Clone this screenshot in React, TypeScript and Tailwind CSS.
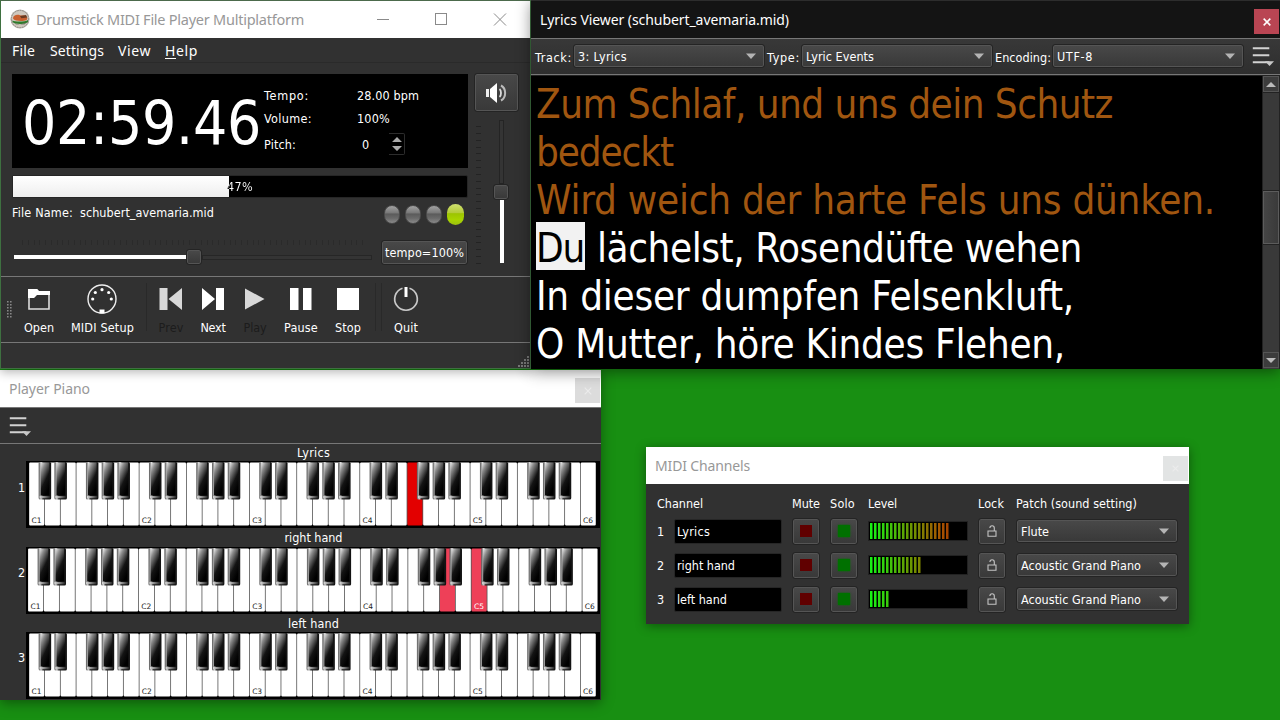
import { useLayoutEffect, useRef, useState, type ReactNode } from "react";

/* A run of text whose letter spacing is adjusted so that it fills w pixels. */
function Fit({ w, className = "", children }: { w: number; className?: string; children: ReactNode }) {
  const ref = useRef<HTMLSpanElement>(null);
  const [spacing, setSpacing] = useState(0);
  useLayoutEffect(() => {
    const el = ref.current;
    if (!el) return;
    const count = (el.textContent ?? "").length;
    setSpacing((w - el.getBoundingClientRect().width) / count);
  }, [w]);
  return (
    <span ref={ref} className={`inline-block shrink-0 whitespace-pre ${className}`} style={{ letterSpacing: `${spacing}px` }}>
      {children}
    </span>
  );
}

const segoe = "font-['Noto_Sans',sans-serif]";
const raised = "border border-[#555] bg-linear-to-b from-[#484848] to-[#393939] outline outline-[#242424] rounded-[2px]";

function Down() {
  return (
    <svg width="10" height="6" viewBox="0 0 10 6" className="shrink-0">
      <path d="M0 .5h10L5 6z" fill="#b4b4b4" />
    </svg>
  );
}

function Combo({ text, w, className }: { text: string; w: number; className: string }) {
  return (
    <div className={`flex h-[22px] shrink-0 items-center justify-between pr-[7px] pl-[3px] ${raised} ${className}`}>
      <Fit w={w} className="pt-[2px]">{text}</Fit>
      <Down />
    </div>
  );
}

function MenuIcon() {
  return (
    <svg width="24" height="20" viewBox="0 0 24 20" className="shrink-0">
      <path d="M.8 1.200h16.500M.8 8.200h16.500M.8 15.200h16.500" stroke="#d2d2d2" strokeWidth="1.900" />
      <path d="M13 14.300h9l-4.500 4.700z" fill="#c8c8c8" />
    </svg>
  );
}

function CloseX({ size, color, w }: { size: number; color: string; w: number }) {
  return (
    <svg width={size} height={size} viewBox="0 0 12 12">
      <path d="M1 1l10 10M11 1L1 11" stroke={color} strokeWidth={w} />
    </svg>
  );
}

function AppIcon() {
  return (
    <svg width="20" height="20" viewBox="0 0 20 20">
      <circle cx="10" cy="10" r="9.600" fill="#b9b4ac" />
      <circle cx="10" cy="10" r="8.600" fill="#cfc8be" stroke="#8f8a84" strokeWidth="1" strokeDasharray="1.500 1" />
      <path d="M2.500 11.500c2 1.500 13 1.500 15.500-.5v1.800c-1.500 2.700-13.500 3-15.500.2z" fill="#2f7a2c" />
      <path d="M4 14.300c3 1.300 9.500 1.200 12.500-.2l-2 1.200H6z" fill="#282c1c" />
      <path d="M3 9.500C3 6 7 5.200 10 6.200c2 .8 3-.4 5 .6 2.500 1.200 3 3 1.500 4.200-3 1.500-11.500 1.500-13.500-1.500z" fill="#c9602f" />
      <path d="M10 7l6-1 1.300 2.500-6 .8z" fill="#6b3a20" />
    </svg>
  );
}

function Led({ on = false }: { on?: boolean }) {
  return on ? (
    <div className="h-[21px] w-[17px] rounded-full bg-[linear-gradient(#d0e070_0,#b4cb3a_42%,#9dc400_46%,#a8d400_75%,#9cc010_100%)]" />
  ) : (
    <div className="h-[19px] w-[16px] rounded-full border border-[#4a4a4a] bg-[linear-gradient(#a2a2a2_0,#777_42%,#5a5a5a_46%,#6a6a6a_72%,#8a8a8a_100%)]" />
  );
}

function Tool({ label, w, cell, dim = false, children }: { label: string; w: number; cell: string; dim?: boolean; children: ReactNode }) {
  return (
    <div className={`flex shrink-0 flex-col items-center ${cell}`}>
      <svg width="32" height="32" viewBox="0 0 32 32">{children}</svg>
      <Fit w={w} className={`mt-[5px] leading-4 ${dim ? "text-[#1c1c1c]" : "text-white"}`}>{label}</Fit>
    </div>
  );
}

function Ticks({ count, vertical }: { count: number; vertical?: boolean }) {
  return (
    <div className={vertical ? "flex h-[138px] w-[5px] flex-col justify-between" : "flex h-[5px] w-[342px] justify-between"}>
      {Array.from({ length: count }, (_, i) => (
        <div key={i} className={vertical ? "h-px w-full bg-[#232323]" : "h-full w-px bg-[#2a2a2a]"} />
      ))}
    </div>
  );
}

function PlayerWindow() {
  return (
    <section className="absolute top-0 left-0 z-10 flex h-[369px] w-[531px] flex-col border border-[#3e7040] border-t-[#4c6a4c] bg-[#313131] shadow-[0_3px_10px_rgba(0,0,0,.3)]">
      <header className={`flex h-[37px] shrink-0 items-center bg-white pb-[2px] pl-[9px] text-[14.500px] text-[#989898] ${segoe}`}>
        <AppIcon />
        <Fit w={268} className="ml-[6px]">Drumstick MIDI File Player Multiplatform</Fit>
        <svg width="132" height="14" viewBox="0 0 132 14" className="ml-[73px]" fill="none" stroke="#8a8a8a">
          <path d="M0 7.500h12M117 1.500l12 12M129 1.500l-12 12" />
          <rect x="58.500" y="1.500" width="11" height="11" />
        </svg>
      </header>
      <nav className={`flex h-[25px] shrink-0 items-center border-b border-[#2a2a2a] pt-[2px] pl-[11px] text-[14px] text-white ${segoe}`}>
        <Fit w={23}>File</Fit>
        <Fit w={54} className="ml-[15px]">Settings</Fit>
        <Fit w={33} className="ml-[14px]">View</Fit>
        <Fit w={33} className="ml-[14px]"><u className="underline-offset-2">H</u>elp</Fit>
      </nav>
      <div className="flex h-[213px] shrink-0 pt-[11px] pl-[11px]">
        <div className="w-[456px] shrink-0">
          <div className="flex h-[94px] overflow-hidden bg-black pl-[10px]">
            <Fit w={239} className="text-[60px] leading-[98px]">02:59.46</Fit>
            <div className="ml-[3px] pt-[13px]">
              <div className="flex h-[18px] items-center"><Fit w={45}>Tempo:</Fit><Fit w={62} className="ml-[48px]">28.00 bpm</Fit></div>
              <div className="mt-[5px] flex h-[18px] items-center"><Fit w={48}>Volume:</Fit><Fit w={33} className="ml-[45px]">100%</Fit></div>
              <div className="mt-[5px] flex h-[22px] items-center">
                <Fit w={32} className="pt-px">Pitch:</Fit>
                <Fit w={8} className="ml-[66px] pt-px">0</Fit>
                <div className="ml-[19px] flex h-[22px] w-4 flex-col items-center justify-center rounded-r-[2px] border border-l-0 border-[#2c2c2c]">
                  <svg width="10" height="14" viewBox="0 0 10 14"><path d="M0 5h10L5 0zM0 9h10l-5 5z" fill="#aaa" /></svg>
                </div>
              </div>
            </div>
          </div>
          <div className="mt-[7px] grid h-[23px] grid-cols-1 grid-rows-1 rounded-[2px] border border-[#262626] bg-black">
            <div className="col-start-1 row-start-1 w-[216px] bg-linear-to-b from-white to-[#eee]" />
            <div className="col-start-1 row-start-1 flex items-center pl-[214px] text-white"><Fit w={26} className="bg-[linear-gradient(90deg,#111_9%,#fff_10%)] bg-clip-text text-transparent">47%</Fit></div>
          </div>
          <div className="flex h-[32px] items-center justify-between pr-[4px]">
            <div className="flex pb-[3px]"><Fit w={61}>File Name:</Fit><Fit w={134} className="ml-[7px]">schubert_avemaria.mid</Fit></div>
            <div className="flex items-center gap-[5px]"><Led /><Led /><Led /><Led on /></div>
          </div>
          <div className="flex h-[40px] pt-px">
            <div className="w-[370px] pl-[2px]">
              <div className="pt-[9px] pl-[8px]"><Ticks count={60} /></div>
              <div className="mt-[4px] flex h-[16px] items-center">
                <div className="h-1 w-[172px] bg-white" />
                <div className={`mx-px h-[14px] w-[14px] ${raised}`} />
                <div className="h-[5px] w-[170px] border border-[#262626] bg-[#343434]" />
              </div>
            </div>
            <div className={`mt-[10px] flex h-[23px] w-[85px] shrink-0 items-center justify-center pt-px ${raised}`}><Fit w={79}>tempo=100%</Fit></div>
          </div>
        </div>
        <div className="ml-[7px] w-[44px]">
          <div className={`flex h-[37px] w-[43px] items-center justify-center pr-[2px] ${raised}`}>
            <svg width="24" height="24" viewBox="0 0 24 24" fill="none">
              <path d="M2 8h3v8H2z" fill="#eee" /><path d="M6 8l7-6v20l-7-6z" fill="#fff" />
              <path d="M15.500 8c2 1.500 2 6.500 0 8" stroke="#ddd" strokeWidth="1.800" />
              <path d="M17 4.500c5.500 3 5.500 12 0 15" stroke="#bbb" strokeWidth="2" />
            </svg>
          </div>
          <div className="flex pt-[9px]">
            <div className="pt-[6px] pl-px"><Ticks count={21} vertical /></div>
            <div className="ml-[13px] flex w-[14px] flex-col items-center">
              <div className="h-[64px] w-[5px] border border-[#242424] bg-[#343434]" />
              <div className={`my-px h-[14px] w-[14px] ${raised}`} />
              <div className="ml-px h-[63px] w-1 bg-white" />
            </div>
          </div>
        </div>
      </div>
      <div className="flex h-[67px] shrink-0 border-y border-[#777] pt-[6px]">
        <svg width="6" height="18" viewBox="0 0 6 18" className="mt-[18px] ml-[6px]"><path d="M.8 0v18M3.800 0v18" stroke="#888" strokeWidth="1.600" strokeDasharray="1.500 1.500" /></svg>
        <Tool label="Open" w={30} cell="w-[52px]">
          <path d="M6 26V7h8l2 3h10v16z" fill="none" stroke="#ddd" strokeWidth="1.600" /><path d="M5 6h9l2 2h11v4H14l-3 3H5z" fill="#fff" />
        </Tool>
        <Tool label="MIDI Setup" w={63} cell="w-[75px]">
          <circle cx="15" cy="16" r="14" fill="none" stroke="#eee" strokeWidth="1.400" />
          <g fill="#fff"><circle cx="5.700" cy="16" r="1.600" /><circle cx="8.300" cy="9.500" r="1.600" /><circle cx="15" cy="6.700" r="1.600" /><circle cx="21.700" cy="9.500" r="1.600" /><circle cx="24.300" cy="16" r="1.600" /><path d="M12.500 26.500h5v4h-5z" /></g>
        </Tool>
        <div className="ml-[6px] h-[48px] w-[5px] border-l border-[#292929]" />
        <Tool label="Prev" w={25} cell="w-[40px]" dim><path d="M4.500 5h8v22h-8zM27 5v22L13.500 16z" fill="#d8d8d8" /></Tool>
        <Tool label="Next" w={25} cell="w-[44px]"><path d="M19 5h8v22h-8zM5 5v22l13-11z" fill="#fff" /></Tool>
        <Tool label="Play" w={23} cell="ml-px w-[38px]" dim><path d="M6 5.500v21L25.500 16z" fill="#d8d8d8" /></Tool>
        <Tool label="Pause" w={34} cell="w-[54px]"><path d="M5 5h8.500v22H5zM18 5h8.500v22H18z" fill="#fff" /></Tool>
        <Tool label="Stop" w={26} cell="w-[40px]"><path d="M5 5h22v22H5z" fill="#fff" /></Tool>
        <div className="ml-[7px] h-[48px] w-[7px] border-x border-[#292929]" />
        <Tool label="Quit" w={24} cell="ml-[5px] w-[38px]">
          <path d="M12.500 5.200a11.300 11.300 0 1 0 7 0" fill="none" stroke="#c8c8c8" strokeWidth="1.700" /><path d="M14.500 4h3v10h-3z" fill="#fff" />
        </Tool>
      </div>
      <footer className="flex min-h-0 flex-1 items-end justify-end">
        <svg width="12" height="12" viewBox="0 0 12 12" fill="#777"><path d="M9 0h2v2H9zM9 3h2v2H9zM6 3h2v2H6zM9 6h2v2H9zM6 6h2v2H6zM3 6h2v2H3zM9 9h2v2H9zM6 9h2v2H6zM3 9h2v2H3zM0 9h2v2H0z" /></svg>
      </footer>
    </section>
  );
}

function Lyric({ w, sung = false, children }: { w: number; sung?: boolean; children: string }) {
  return <div className={`h-[48px] ${sung ? "text-[#a05610]" : "text-white"}`}><Fit w={w}>{children}</Fit></div>;
}

function LyricsWindow() {
  return (
    <section className="absolute top-0 left-[531px] z-20 flex h-[369px] w-[749px] flex-col bg-[#313131] shadow-[0_3px_14px_rgba(0,0,0,.45)]">
      <header className={`flex h-[38px] shrink-0 items-center justify-between border-t border-[#2d2d2d] bg-[#141414] pl-[9px] text-[14px] text-white ${segoe}`}>
        <Fit w={249}>Lyrics Viewer (schubert_avemaria.mid)</Fit>
        <div className="mt-[4px] mr-px flex h-[25px] w-[25px] items-center justify-center bg-[#b94553]"><CloseX size={8} color="#fff" w={2.3} /></div>
      </header>
      <div className="flex h-[37px] shrink-0 items-center border-y border-[#777] bg-linear-to-b from-[#383838] to-[#2e2e2e] pb-px pl-[4px]">
        <Fit w={37} className="pt-[3px]">Track:</Fit>
        <Combo text="3: Lyrics" w={49} className="ml-[2px] w-[190px]" />
        <Fit w={33} className="ml-[3px] pt-[3px]">Type:</Fit>
        <Combo text="Lyric Events" w={68} className="ml-[2px] w-[190px]" />
        <Fit w={56} className="ml-[3px] pt-[3px]">Encoding:</Fit>
        <Combo text="UTF-8" w={36} className="ml-[2px] w-[190px]" />
        <div className="ml-[9px] pt-px"><MenuIcon /></div>
      </div>
      <div className="flex min-h-0 flex-1 border-t border-[#222] bg-black">
        <div className="min-w-0 flex-1 overflow-hidden pt-[2px] pl-[5px] text-[40px] leading-[52px]">
          <Lyric w={577} sung>Zum Schlaf, und uns dein Schutz</Lyric>
          <Lyric w={137} sung>bedeckt</Lyric>
          <Lyric w={679} sung>Wird weich der harte Fels uns dünken.</Lyric>
          <div className="flex h-[48px] text-white">
            <span className="h-[48px] w-[49px] bg-[#f2f2f2] text-black"><Fit w={48}>Du</Fit></span>
            <Fit w={485} className="ml-[12px]">lächelst, Rosendüfte wehen</Fit>
          </div>
          <Lyric w={538}>In dieser dumpfen Felsenkluft,</Lyric>
          <Lyric w={529}>O Mutter, höre Kindes Flehen,</Lyric>
        </div>
        <div className="flex w-[18px] shrink-0 flex-col border-x border-[#222] bg-[#393939]">
          <div className="flex h-[16px] items-center justify-center border border-[#555] bg-[#3c3c3c]"><svg width="10" height="5"><path d="M0 5h10L5 0z" fill="#bbb" /></svg></div>
          <div className="h-[99px] border-t border-[#222]" />
          <div className="h-[53px] border border-[#5c5c5c] bg-linear-to-r from-[#454545] to-[#3a3a3a] outline outline-[#222]" />
          <div className="flex-1" />
          <div className="mb-px flex h-[16px] items-center justify-center border border-[#555] bg-[#3c3c3c]"><svg width="10" height="5"><path d="M0 0h10L5 5z" fill="#bbb" /></svg></div>
        </div>
      </div>
    </section>
  );
}

const blackAfter = [0, 1, 3, 4, 5];

function Keyboard({ left, pitch, pressed, color }: { left: number; pitch: number; pressed: number[]; color: string }) {
  const whites = Array.from({ length: 36 }, (_, i) => i);
  return (
    <svg width="575" height="67" viewBox="0 0 575 67" className="block">
      <defs>
        <linearGradient id="ebony" x1="0" y1="0" x2=".55" y2="1"><stop offset="0" stopColor="#f0f0f0" /><stop offset=".25" stopColor="#8c8c8c" /><stop offset=".65" stopColor="#141414" /><stop offset="1" stopColor="#000" /></linearGradient>
        <linearGradient id="lip" x1="0" x2="1"><stop offset="0" stopColor="#ddd" /><stop offset="1" stopColor="#222" /></linearGradient>
        <linearGradient id="edge" x1="0" x2="1"><stop offset="0" stopColor="#555" /><stop offset=".2" stopColor="#ccc" /><stop offset=".35" stopColor="#222" /><stop offset="1" stopColor="#111" /></linearGradient>
      </defs>
      <rect width="574" height="67" fill="#000" />
      <rect x={left + 0.5} y="2.500" width={pitch * 36 - 1.5} height="61" fill="#555" />
      {whites.map((i) => (
        <g key={i}>
          <rect x={left + i * pitch + 0.3} y="1.500" width={pitch - 0.8} height="63" rx="1" fill={pressed.includes(i) ? color : "#fff"} />
          {i % 7 === 0 && (
            <text x={left + i * pitch + 2.6} y="62" fontSize="7.500" className="font-['DejaVu_Sans',sans-serif]" fill={pressed.includes(i) ? "#fff" : "#222"}>{`C${1 + i / 7}`}</text>
          )}
        </g>
      ))}
      {whites.filter((i) => i < 35 && blackAfter.includes(i % 7)).map((i) => {
        const x = left + (i + 1) * pitch - 6;
        return (
          <g key={i}>
            <rect x={x} y="1" width="12.500" height="37.500" rx="1.500" fill="url(#edge)" />
            <rect x={x + 2} y="1.500" width="8.700" height="33" fill="url(#ebony)" />
            <rect x={x + 1} y="35" width="10.500" height="2.200" fill="url(#lip)" />
          </g>
        );
      })}
    </svg>
  );
}

function PianoWindow() {
  const rows = [
    { name: "Lyrics", w: 33, left: 2.9, pitch: 15.76, pressed: [24], color: "#e30000", gap: "h-[17px]", lead: "leading-[18px]" },
    { name: "right hand", w: 58, left: 1.8, pitch: 15.84, pressed: [26, 28], color: "#ee4058", gap: "h-[19px]", lead: "leading-[20px]" },
    { name: "left hand", w: 51, left: 2.9, pitch: 15.76, pressed: [] as number[], color: "#ee4058", gap: "h-[18px]", lead: "leading-[20px]" },
  ];
  return (
    <section className="absolute top-[370px] left-0 flex h-[330px] w-[601px] flex-col bg-[#313131] shadow-[0_3px_12px_rgba(0,0,0,.4)]">
      <header className={`flex h-[37px] shrink-0 items-center justify-between bg-white pl-[9px] text-[14px] text-[#989898] ${segoe}`}>
        <Fit w={81}>Player Piano</Fit>
        <div className="mt-[4px] mr-px flex h-[25px] w-[25px] items-center justify-center bg-[#dcdcdc]"><CloseX size={8} color="#ebebeb" w={1.6} /></div>
      </header>
      <div className="h-[37px] shrink-0 border-y border-[#777] pt-[9px] pl-[9px]"><MenuIcon /></div>
      {rows.map((r, i) => (
        <div key={r.name} className="flex">
          <div className="flex w-[26px] items-center justify-end pt-[3px]"><Fit w={8}>{String(i + 1)}</Fit></div>
          <div className="flex w-[575px] flex-col items-center">
            <div className={`${r.gap} ${r.lead}`}><Fit w={r.w}>{r.name}</Fit></div>
            <Keyboard left={r.left} pitch={r.pitch} pressed={r.pressed} color={r.color} />
          </div>
        </div>
      ))}
    </section>
  );
}

function Level({ count }: { count: number }) {
  const mix = (a: number, b: number, t: number) => Math.round(a + (b - a) * Math.min(1, Math.max(0, t)));
  return (
    <div className="flex h-[20px] w-[100px] gap-px border border-[#222] bg-black p-px">
      {Array.from({ length: count }, (_, i) => (
        <div
          key={i}
          className="h-full w-[3px] shrink-0 border-r border-r-black/50"
          style={{ backgroundColor: `rgb(${mix(24, 165, i / 17)}, ${mix(240, 70, i / 19)}, ${mix(20, 0, i / 10)})` }}
        />
      ))}
    </div>
  );
}

function ChannelsWindow() {
  const rows = [
    { name: "Lyrics", w: 33, level: 20, patch: "Flute", pw: 28 },
    { name: "right hand", w: 58, level: 13, patch: "Acoustic Grand Piano", pw: 120 },
    { name: "left hand", w: 50, level: 5, patch: "Acoustic Grand Piano", pw: 120 },
  ];
  return (
    <section className="absolute top-[447px] left-[646px] flex h-[177px] w-[543px] flex-col bg-[#313131] shadow-[0_2px_10px_rgba(0,0,0,.4)]">
      <header className={`flex h-[37px] shrink-0 items-center justify-between bg-white pl-[9px] text-[14px] text-[#989898] ${segoe}`}>
        <Fit w={95}>MIDI Channels</Fit>
        <div className="mt-[5px] mr-px flex h-[25px] w-[25px] items-center justify-center bg-[#e2e4e4]"><CloseX size={7} color="#ececec" w={2} /></div>
      </header>
      <div className="flex h-[30px] shrink-0 items-center pt-[10px] pl-[11px]">
        <div className="w-[135px]"><Fit w={46}>Channel</Fit></div>
        <div className="w-[38px]"><Fit w={28}>Mute</Fit></div>
        <div className="w-[38px]"><Fit w={25}>Solo</Fit></div>
        <div className="w-[110px]"><Fit w={29}>Level</Fit></div>
        <div className="w-[38px]"><Fit w={26}>Lock</Fit></div>
        <Fit w={121}>Patch (sound setting)</Fit>
      </div>
      {rows.map((r, i) => (
        <div key={r.name} className="flex h-[34px] shrink-0 items-center pl-[11px]">
          <div className="w-[17px] pt-[2px]"><Fit w={8}>{String(i + 1)}</Fit></div>
          <div className="flex h-[25px] w-[108px] items-center rounded-[2px] border border-[#262626] bg-black pt-px pl-[2px]"><Fit w={r.w}>{r.name}</Fit></div>
          <div className={`ml-[11px] flex h-[25px] w-[26px] items-center justify-center ${raised}`}><div className="h-3 w-3 bg-[#600000]" /></div>
          <div className={`ml-[12px] flex h-[25px] w-[26px] items-center justify-center ${raised}`}><div className="h-3 w-3 bg-[#007000] shadow-[0_0_2px_#007000]" /></div>
          <div className="ml-[11px]"><Level count={r.level} /></div>
          <div className={`ml-[11px] flex h-[25px] w-[26px] items-center justify-center ${raised}`}>
            <svg width="10" height="12" viewBox="0 0 10 12" fill="none" stroke="#c4c4c4" strokeWidth="1.100"><path d="M1 6h8v5.300H1zM7.300 6V3a2.200 2.200 0 0 0-4.400 0" /></svg>
          </div>
          <Combo text={r.patch} w={r.pw} className="ml-[12px] w-[160px]" />
        </div>
      ))}
    </section>
  );
}

export default function App() {
  return (
    <main className="relative h-[720px] w-[1280px] overflow-hidden bg-[#188f12] text-[12.5px] leading-4 text-white font-['DejaVu_Sans_Condensed','DejaVu_Sans',sans-serif]">
      <PianoWindow />
      <ChannelsWindow />
      <PlayerWindow />
      <LyricsWindow />
    </main>
  );
}
